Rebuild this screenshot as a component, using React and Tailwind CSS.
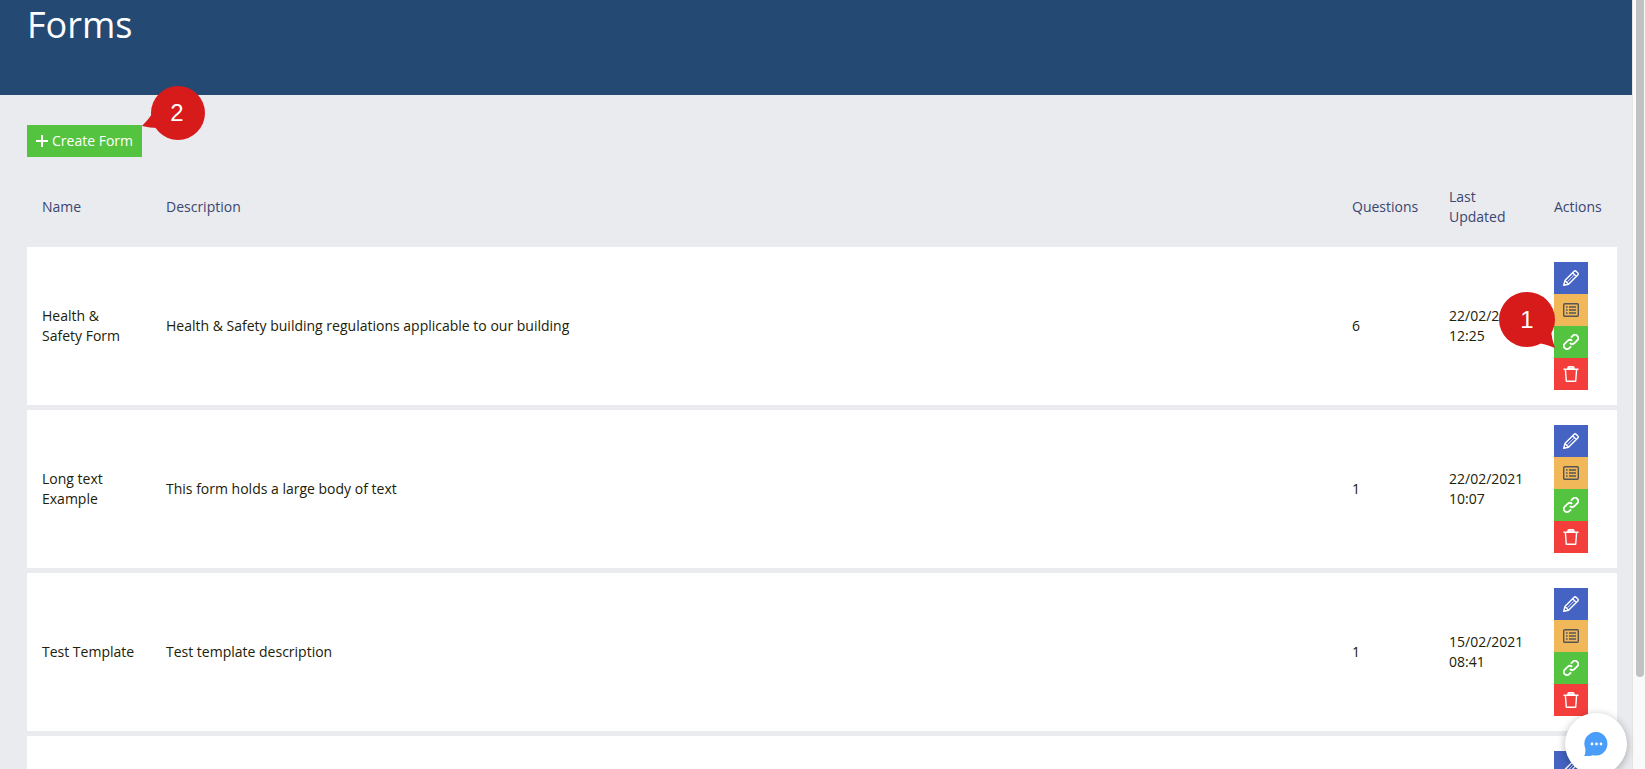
const forms = [
  { id: 1, name: 'Health & Safety Form', description: 'Health & Safety building regulations applicable to our building', questions: 6, date: '22/02/2021', time: '12:25', hint: true },
  { id: 2, name: 'Long text Example', description: 'This form holds a large body of text', questions: 1, date: '22/02/2021', time: '10:07' },
  { id: 3, name: 'Test Template', description: 'Test template description', questions: 1, date: '15/02/2021', time: '08:41' },
  { id: 4, name: '', description: '', questions: '', date: '', time: '' },
];

const Icon = ({ children }) => (
  <svg
    viewBox="0 0 16 16"
    className="h-4 w-4"
    fill="none"
    stroke="currentColor"
    strokeWidth="1.4"
    strokeLinejoin="round"
    aria-hidden="true"
  >
    {children}
  </svg>
);

const PencilIcon = () => (
  <Icon>
    <path d="M.7 15.3 1.9 10.6 10.9 1.5Q11.8.6 12.8.9L15.1 3.2Q15.5 4.3 14.6 5.2L5.5 14.2ZM9.6 2.8 13.3 6.5M1.9 10.6 5.5 14.2" />
    <path d="M4.4 11.800 10.900 5.300" strokeWidth=".8" />
  </Icon>
);

const ListIcon = () => (
  <Icon>
    <rect x=".7" y="1.7" width="14.6" height="12.6" rx="1" />
    <path d="M3 5h1.6M6 5h7M3 8h1.6M6 8h7M3 11h1.6M6 11h7" />
  </Icon>
);

const LinkIcon = () => (
  <Icon>
    <g transform="rotate(-45 8 8)" strokeWidth="1.8">
      <path d="M5 11.2H2.400A3.200 3.200 0 0 1 2.400 4.800H6.400A3.200 3.200 0 0 1 9.600 8" />
      <path d="M11 4.800H13.600A3.200 3.200 0 0 1 13.600 11.200H9.600A3.200 3.200 0 0 1 6.400 8" />
    </g>
  </Icon>
);

const TrashIcon = () => (
  <Icon>
    <path d="M5 3V1.9Q5 .8 6.100.8H9.900Q11 .8 11 1.900V3Z" fill="currentColor" fillOpacity=".6" />
    <path d="M.5 3.300H15.500M2.400 3.300 3.300 15.200H12.700L13.600 3.300" />
  </Icon>
);

const ActionButtons = () => (
  <div className="flex w-[34px] flex-col">
    <button aria-label="Edit" className="flex h-8 items-center justify-center bg-[#4463c3] text-white"><PencilIcon /></button>
    <button aria-label="Responses" className="flex h-8 items-center justify-center bg-[#f0b858] text-[#555]"><ListIcon /></button>
    <button aria-label="Link" className="flex h-8 items-center justify-center bg-[#54c33f] text-white"><LinkIcon /></button>
    <button aria-label="Delete" className="flex h-8 items-center justify-center bg-[#f33e3b] text-white"><TrashIcon /></button>
  </div>
);

const FormRow = ({ form }) => (
  <tr className="h-[158px] bg-white text-[#212108]">
    <td className="p-[15px]">{form.name}</td>
    <td className="p-[15px]">{form.description}</td>
    <td className="p-[15px]">{form.questions}</td>
    <td className="p-[15px]">
      {form.date}
      <br />
      {form.time}
    </td>
    <td className="relative p-[15px]">
      <ActionButtons />
      {form.hint && (
        <div className="absolute top-[45px] -left-10 h-14 w-14">
          <svg viewBox="0 0 56 56" className="h-full w-full" fill="#d71a1a" aria-hidden="true">
            <ellipse cx="28" cy="27.500" rx="28" ry="27.500" />
            <path d="M38 51Q45 51.500 56 56 53 48 52 39Z" />
          </svg>
          <span className="absolute inset-0 flex items-center justify-center font-['Liberation_Sans',sans-serif] text-2xl text-white">1</span>
        </div>
      )}
    </td>
  </tr>
);

const App = () => {
  return (
    <div className="flex h-screen overflow-hidden bg-[#e9ebee] font-['Open_Sans',sans-serif] text-sm leading-5">
      <div className="min-w-0 flex-1">
        <header className="h-[95px] bg-[#244a73] px-[27px]">
          <h1 className="text-4xl leading-[50px] text-white">Forms</h1>
        </header>
        <main className="pt-[30px] pr-[15px] pl-[27px]">
          <div className="relative w-fit">
            <button className="flex h-8 items-center gap-1 bg-[#54c33f] px-[9px] text-white">
              <svg viewBox="0 0 12 12" className="h-3 w-3" stroke="currentColor" strokeWidth="2" aria-hidden="true">
                <path d="M6 0V12M0 6H12" />
              </svg>
              Create Form
            </button>
            <div className="absolute -top-[39px] left-full h-[54px] w-[63px]">
              <svg viewBox="0 0 63 54" className="h-full w-full" fill="#d71a1a" aria-hidden="true">
                <circle cx="36" cy="27" r="27" />
                <path d="M0 40Q6 34 10 28L16 42Q8 42 0 40Z" />
              </svg>
              <span className="absolute top-0 right-0 flex h-[54px] w-14 items-center justify-center font-['Liberation_Sans',sans-serif] text-2xl text-white">2</span>
            </div>
          </div>
          <table className="mt-[10px] w-full table-fixed border-separate border-spacing-x-0 border-spacing-y-[5px] text-left">
            <thead>
              <tr className="text-[#3b4672]">
                <th className="w-[124px] p-[15px] font-normal">Name</th>
                <th className="p-[15px] font-normal">Description</th>
                <th className="w-[97px] p-[15px] font-normal">Questions</th>
                <th className="w-[105px] p-[15px] font-normal">Last Updated</th>
                <th className="w-[78px] p-[15px] font-normal">Actions</th>
              </tr>
            </thead>
            <tbody>
              {forms.map((form) => (
                <FormRow key={form.id} form={form} />
              ))}
            </tbody>
          </table>
        </main>
      </div>
      <div className="flex w-[13px] justify-end border-l border-[#e4e4e4] bg-[#fafafa] pr-px">
        <div className="h-[88%] w-2 rounded-b-full bg-[#c1c1c1]" />
      </div>
      <button
        aria-label="Open chat"
        className="fixed right-[18px] -bottom-[6px] flex h-[62px] w-[62px] items-center justify-center rounded-full bg-white shadow-[0_2px_8px_rgba(0,0,0,0.3)]"
      >
        <svg viewBox="0 0 24 24" className="h-6 w-6" aria-hidden="true">
          <path d="M12.500 0A11.500 11.800 0 1 1 9 23.200Q4.500 24.500 0 24.300 1.800 21.500 1.300 16.500A11.500 11.800 0 0 1 12.500 0Z" fill="#4a9df8" />
          <g fill="#fff">
            <circle cx="8" cy="12" r="1.400" />
            <circle cx="12.500" cy="12" r="1.400" />
            <circle cx="17" cy="12" r="1.400" />
          </g>
        </svg>
      </button>
    </div>
  );
};

export default App;
